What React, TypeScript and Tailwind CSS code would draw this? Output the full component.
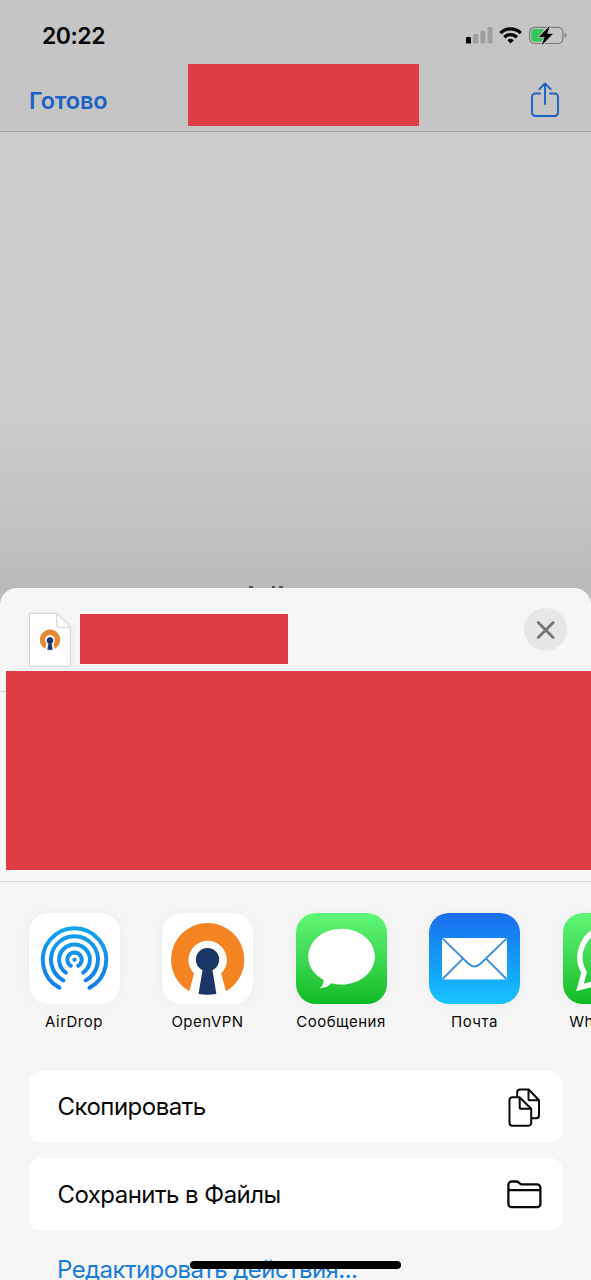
import type { ReactNode } from "react";

const ORANGE = "#f48322";
const NAVY = "#1b3765";

function StatusIcons() {
  return (
    <svg width="102" height="22" viewBox="465 25 102 22" fill="none" className="shrink-0">
      <rect x="466" y="37" width="5" height="6.6" rx="1.2" fill="#050505" />
      <g fill="#9f9f9f">
        <rect x="473.2" y="34" width="5" height="9.6" rx="1.2" />
        <rect x="480.4" y="30.7" width="5" height="12.9" rx="1.2" />
        <rect x="487.6" y="27" width="5" height="16.6" rx="1.2" />
      </g>
      <g stroke="#050505" strokeWidth="3.3">
        <path d="M500.4 33.1a14.6 14.6 0 0 1 20.4 0" />
        <path d="M504.3 37.2a9 9 0 0 1 12.6 0" />
      </g>
      <path d="M510.6 43.6l-3.3-3.3a4.8 4.8 0 0 1 6.6 0z" fill="#050505" />
      <rect x="529.6" y="27.3" width="33.3" height="16.2" rx="4.8" stroke="#7d7d7d" strokeWidth="1.2" />
      <path d="M564.7 32.8c2.2.8 2.2 4.4 0 5.2z" fill="#7d7d7d" />
      <path d="M534.4 29h9.4v12.8h-9.4a3 3 0 0 1-3-3v-6.8a3 3 0 0 1 3-3z" fill="#34c759" />
      <path d="M549.3 26.6l-10 10.2h5.5l-2.4 7.6 10-10.4h-5.500z" fill="#050505" stroke="#c5c5c5" strokeWidth="2.600" strokeLinejoin="round" />
      <path d="M549.3 26.6l-10 10.2h5.5l-2.4 7.6 10-10.4h-5.500z" fill="#050505" stroke="#050505" strokeWidth=".5" strokeLinejoin="round" />
    </svg>
  );
}

function ShareIcon() {
  return (
    <svg width="30" height="36" viewBox="0 0 30 36" fill="none" stroke="#1b62c4" strokeWidth="1.9" strokeLinecap="round" strokeLinejoin="round">
      <path d="M10 11.5H5.4a3.4 3.4 0 0 0-3.4 3.4v15.7A3.4 3.4 0 0 0 5.4 34h19.2a3.4 3.4 0 0 0 3.4-3.4V14.9a3.4 3.4 0 0 0-3.4-3.4H20" />
      <path d="M15 22V1.700M9.300 7.200L15 1.500l5.700 5.700" />
    </svg>
  );
}

function FileIcon() {
  return (
    <svg width="44" height="56" viewBox="28 612 44 56" fill="none" className="drop-shadow-[0_0_2px_rgba(0,0,0,0.08)]">
      <path d="M30.5 613.5h26.2l13.8 14v37.6a1.2 1.2 0 0 1-1.2 1.2H30.700a1.200 1.200 0 0 1-1.200-1.200v-50.400a1.200 1.200 0 0 1 1-1.200z" fill="#fdfdfd" stroke="#d3d4d4" />
      <path d="M56.7 613.8v11.400a2.200 2.200 0 0 0 2.200 2.200h11.400" stroke="#d3d4d4" />
      <path d="M45.2 648.7a10.200 10.200 0 1 1 9.600 0l-1.400-5a5 5 0 1 0-6.800 0z" fill="#e48a35" />
      <path d="M48.600 643.300a3.200 3.200 0 1 1 2.800 0l1 6.400h-4.800z" fill={NAVY} stroke={NAVY} strokeWidth=".4" />
    </svg>
  );
}

function AirDropArt() {
  return (
    <svg width="91" height="91" viewBox="0 0 91 91" fill="none" stroke="url(#air)" strokeWidth="4" strokeLinecap="round">
      <defs>
        <linearGradient id="air" gradientUnits="userSpaceOnUse" x1="0" y1="14" x2="0" y2="78">
          <stop stopColor="#12a5ed" />
          <stop offset="1" stopColor="#1479e8" />
        </linearGradient>
      </defs>
      <circle cx="45.500" cy="46.800" r="2.100" fill="#138de9" stroke="none" />
      <path d="M41.800 52.800a7.200 7.200 0 1 1 7.400 0" />
      <path d="M36.900 59.600a15.400 15.400 0 1 1 17.200 0" />
      <path d="M34.400 67.400a23.500 23.500 0 1 1 22.200 0" />
      <path d="M30.500 74.800a31.700 31.700 0 1 1 30 0" />
    </svg>
  );
}

function OpenVpnArt() {
  return (
    <svg width="91" height="91" viewBox="0 0 91 91">
      <path d="M27.300 78.300A36.600 36.600 0 1 1 64 78.300L59.200 60.600a19.200 19.200 0 1 0-27.100 0z" fill={ORANGE} />
      <path d="M40.500 57.200a11.700 11.700 0 1 1 10 0l3.900 23.900q-8.900 1.200-17.900 0z" fill={NAVY} />
    </svg>
  );
}

function MessagesArt() {
  return (
    <svg width="91" height="91" viewBox="0 0 91 91">
      <path d="M45.500 15.800C27 15.800 12.300 28.300 12.300 43.700c0 9.900 6.200 18.300 15.500 23.200-.1 3.200-1.300 5.800-4.200 8.400 5.100-.2 8.300-1.800 12-5 3.100.8 6.300 1.200 9.900 1.200 18.400 0 33.400-12.400 33.400-27.800S63.900 15.800 45.500 15.800z" fill="#fff" />
    </svg>
  );
}

function MailArt() {
  return (
    <svg width="91" height="91" viewBox="0 0 91 91" fill="none" stroke="#3a8fda" strokeWidth="1.9">
      <rect x="13" y="25" width="65" height="41.500" rx="1.500" fill="#fff" stroke="none" />
      <path d="M13.600 25.600L39 50.300q6.500 6.200 13 0L77.400 25.600M13.600 66l20.300-20.300M77.400 66L57.100 45.700" />
    </svg>
  );
}

function WhatsAppArt() {
  return (
    <svg width="91" height="91" viewBox="0 0 91 91" fill="none">
      <path d="M17 74.500l4.100-15.100a30 30 0 1 1 11.200 11z" stroke="#fff" strokeWidth="5.400" />
    </svg>
  );
}

function CopyIcon() {
  return (
    <svg width="32" height="39" viewBox="0 0 32 39" fill="none" stroke="#080808" strokeWidth="2" strokeLinejoin="round">
      <path d="M9.200 8.500V4.300A2.800 2.800 0 0 1 12 1.500h8.700L31 12.300v15.200a2.800 2.800 0 0 1-2.800 2.800H24M20.500 1.800v8.900a1.600 1.600 0 0 0 1.600 1.600h8.600" />
      <path d="M4.300 9.200h7.300l11.600 11.600v14.100a2.800 2.800 0 0 1-2.800 2.800H4.300a2.800 2.800 0 0 1-2.800-2.800V12a2.800 2.800 0 0 1 2.800-2.800z" />
      <path d="M11.700 9.500v9.700a1.600 1.600 0 0 0 1.600 1.600h9.600" />
    </svg>
  );
}

function FolderIcon() {
  return (
    <svg width="35" height="29" viewBox="0 0 35 29" fill="none" stroke="#080808" strokeWidth="2.300" strokeLinejoin="round">
      <path d="M1.400 24V4.800a3.300 3.300 0 0 1 3.300-3.300h4.600q1.300 0 2.300.9l1.200 1q1 .9 2.300.9H30a3.400 3.400 0 0 1 3.400 3.400V24a3.200 3.200 0 0 1-3.200 3.200H4.600A3.200 3.200 0 0 1 1.400 24zM1.400 10.200h32" />
    </svg>
  );
}

const apps: { name: string; tile: string; art: ReactNode }[] = [
  { name: "AirDrop", tile: "bg-white", art: <AirDropArt /> },
  { name: "OpenVPN", tile: "bg-white", art: <OpenVpnArt /> },
  { name: "Сообщения", tile: "bg-linear-to-b from-[#5ff777] to-[#08bb22]", art: <MessagesArt /> },
  { name: "Почта", tile: "bg-linear-to-b from-[#1d6cef] to-[#19c4fc]", art: <MailArt /> },
  { name: "WhatsApp", tile: "bg-linear-to-b from-[#5ff777] to-[#08bb22]", art: <WhatsAppArt /> },
];

export default function App() {
  return (
    <div className="relative flex h-[1280px] w-[591px] flex-col overflow-hidden bg-[#babcba] font-['Inter','Liberation_Sans',sans-serif] text-[#080808]">
      <header className="h-[132px] shrink-0 border-b border-[#a4a4a4] bg-[#c5c5c5]">
        <div className="flex h-16 items-center justify-between pt-[7px] pr-6 pl-[42px]">
          <span className="text-[23px] leading-7 font-semibold tracking-[-0.5px]">20:22</span>
          <StatusIcons />
        </div>
        <div className="grid h-[62px] grid-cols-[188px_231px_1fr]">
          <button className="pt-[11px] pl-[29px] text-left text-[23.5px] font-semibold tracking-[-0.15px] text-[#1b62c4]">Готово</button>
          <div className="bg-[#e03c47]" />
          <button className="flex justify-end pt-[18px] pr-[31px]" aria-label="Поделиться"><ShareIcon /></button>
        </div>
      </header>

      <div className="flex h-[456px] shrink-0 items-end bg-linear-to-b from-[#cccccc] from-60% via-[#c4c4c4] via-80% to-[#b9bbb9] pl-[249px]">
        <i className="h-[2px] w-1 bg-[#555]" />
        <i className="ml-[19px] h-[2px] w-[3px] bg-[#555]" />
        <i className="ml-1 h-[2px] w-1 bg-[#555]" />
      </div>

      <main className="-mb-4 flex flex-1 flex-col rounded-t-[17px] bg-[#f5f6f5]">
        <div className="flex h-[83px] shrink-0 items-start pr-6 pl-7">
          <div className="pt-6"><FileIcon /></div>
          <div className="mt-[26px] ml-2 h-[50px] w-52 bg-[#e03c47]" />
          <button className="mt-5 ml-auto flex size-[43px] items-center justify-center rounded-full bg-[#e6e7e7]" aria-label="Закрыть">
            <svg width="20" height="20" viewBox="0 0 20 20" stroke="#747575" strokeWidth="2.800" strokeLinecap="round">
              <path d="M2.200 2.500l15 15M17.200 2.500l-15 15" />
            </svg>
          </button>
        </div>
        <div className="flex h-[211px] shrink-0 items-start border-b border-[#d7d9d8]">
          <div className="h-[21px] w-[6px] border-b border-[#d1d3d2]" />
          <div className="h-[199px] flex-1 bg-[#e03c47]" />
        </div>

        <div className="flex shrink-0 gap-[42.5px] overflow-hidden pt-[31px] pb-[39px] pl-[28.5px]">
          {apps.map((app) => (
            <div key={app.name} className="flex w-[91px] shrink-0 flex-col items-center">
              <div className={`size-[91px] overflow-hidden rounded-[20px] shadow-[0_0_18px_rgba(0,0,0,0.045)] ${app.tile}`}>{app.art}</div>
              <span className="mt-2 text-[15px] leading-5 tracking-[0.5px] whitespace-nowrap">{app.name}</span>
            </div>
          ))}
        </div>

        <div className="flex flex-col gap-[15px] pr-[29px] pl-[28.5px]">
          <button className="flex h-[72px] items-center justify-between rounded-xl bg-white pr-[22px] pl-[29px] text-[24px] tracking-[-0.52px]">
            Скопировать
            <CopyIcon />
          </button>
          <button className="flex h-[73px] items-center justify-between rounded-xl bg-white pr-5 pl-[29px] text-[24px] tracking-[-0.54px]">
            Сохранить в Файлы
            <FolderIcon />
          </button>
        </div>
        <button className="mt-[23px] pl-[57px] text-left text-[24px] leading-8 tracking-[-0.57px] text-[#197bdb]">Редактировать действия...</button>
      </main>
      <div className="absolute top-[1261px] left-[190px] h-[8px] w-[211px] rounded-full bg-black" />
    </div>
  );
}
